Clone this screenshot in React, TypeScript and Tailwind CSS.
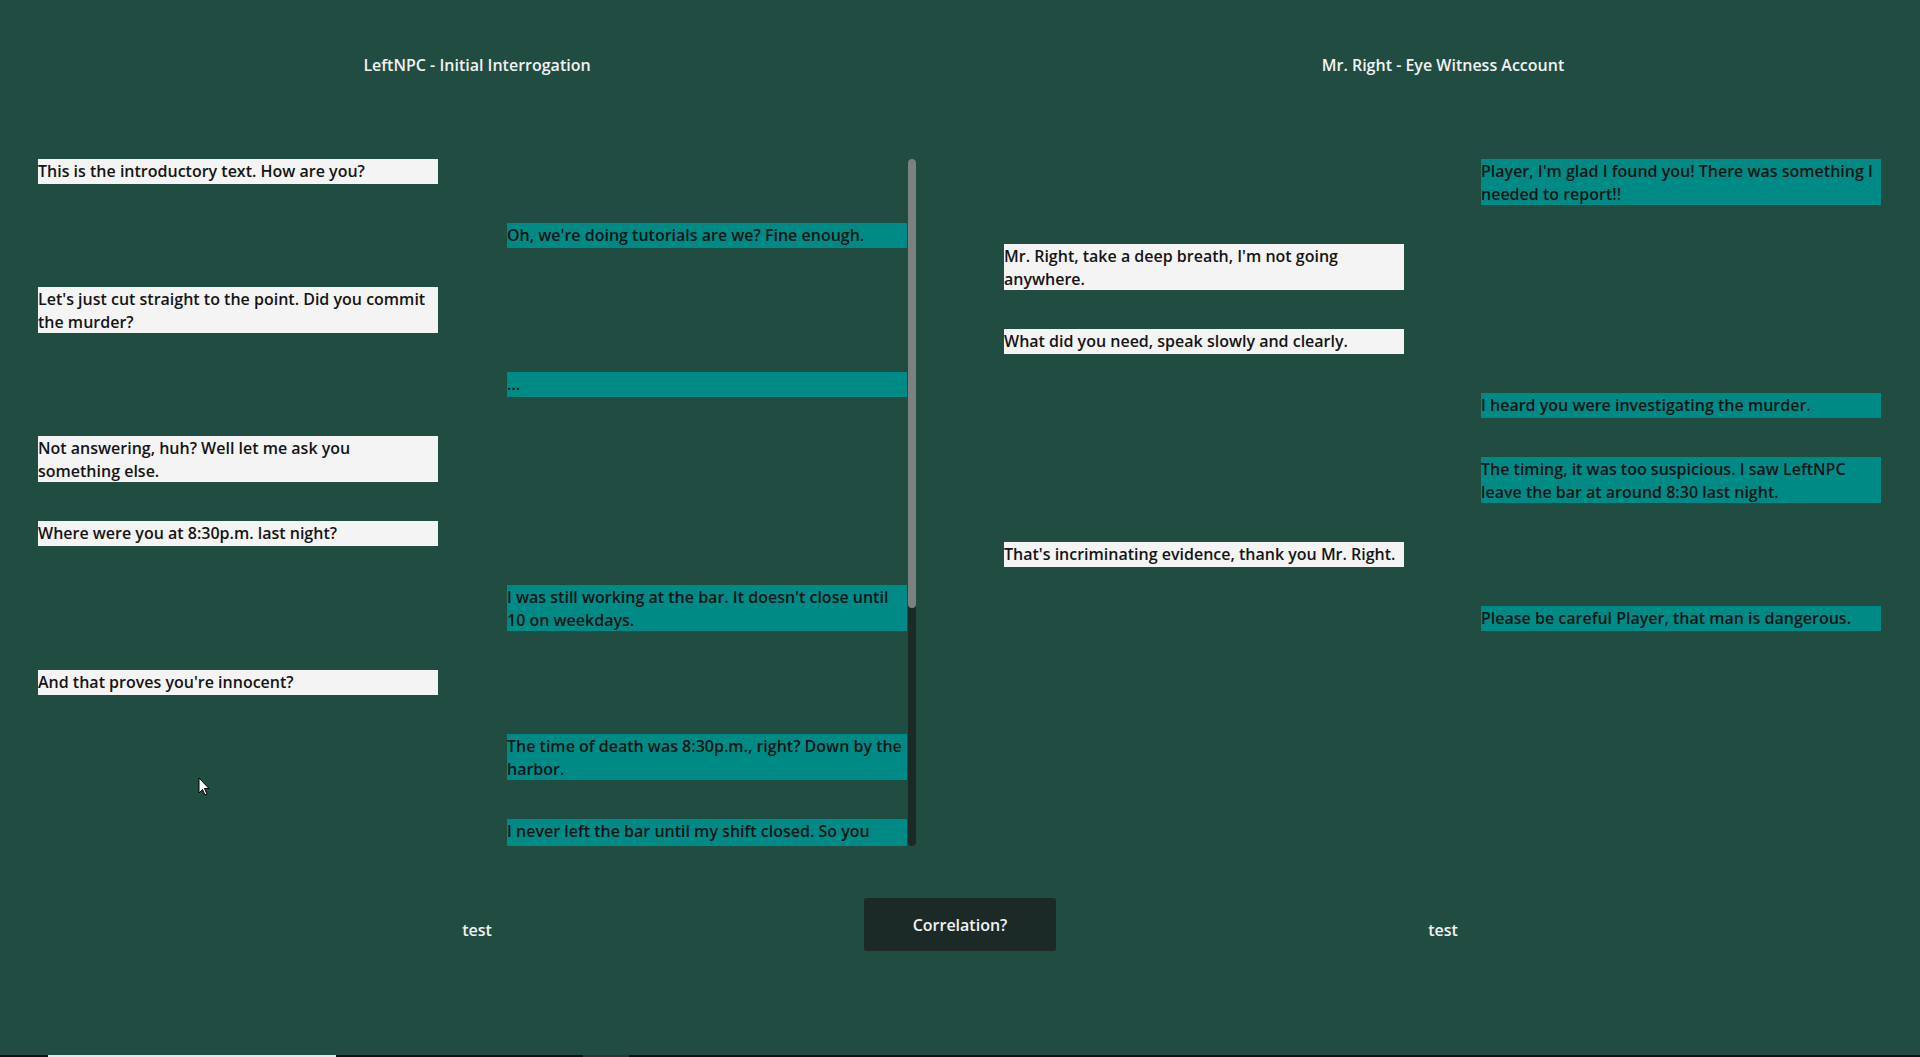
type Line = { side: 'player' | 'npc'; text: string; extra?: string };

const leftLines: Line[] = [
  { side: 'player', text: 'This is the introductory text. How are you?' },
  { side: 'npc', text: "Oh, we're doing tutorials are we? Fine enough." },
  { side: 'player', text: "Let's just cut straight to the point. Did you commit the murder?" },
  { side: 'npc', text: '...' },
  { side: 'player', text: 'Not answering, huh? Well let me ask you something else.' },
  { side: 'player', text: 'Where were you at 8:30p.m. last night?' },
  { side: 'npc', text: "I was still working at the bar. It doesn't close until 10 on weekdays." },
  { side: 'player', text: "And that proves you're innocent?" },
  { side: 'npc', text: 'The time of death was 8:30p.m., right? Down by the harbor.' },
  { side: 'npc', text: 'I never left the bar until my shift closed. So you', extra: 'min-h-[46px]' },
];

const rightLines: Line[] = [
  { side: 'npc', text: "Player, I'm glad I found you! There was something I needed to report!!" },
  { side: 'player', text: "Mr. Right, take a deep breath, I'm not going anywhere." },
  { side: 'player', text: 'What did you need, speak slowly and clearly.' },
  { side: 'npc', text: 'I heard you were investigating the murder.' },
  { side: 'npc', text: 'The timing, it was too suspicious. I saw LeftNPC leave the bar at around 8:30 last night.' },
  { side: 'player', text: "That's incriminating evidence, thank you Mr. Right." },
  { side: 'npc', text: 'Please be careful Player, that man is dangerous.' },
];

function Bubble({ line }: { line: Line }) {
  // 玩家台词靠左白底，NPC 台词靠右青色底
  const color = line.side === 'player' ? 'bg-[#f4f4f4] self-start' : 'bg-[#008a86] self-end';
  return (
    <div className={`w-[400px] min-h-[25px] shrink-0 pr-[4px] text-[16px] leading-[23px] text-[#141414] ${color} ${line.extra ?? ''}`}>
      <span className="relative top-[1px]">{line.text}</span>
    </div>
  );
}

function Panel({ title, lines, scroll }: { title: string; lines: Line[]; scroll?: boolean }) {
  return (
    <div className="flex flex-col w-[878px] shrink-0">
      <div className="pt-[54px] h-[77px] text-center text-[16px] leading-[23px] text-[#f2f2f2]">{title}</div>
      <div className="mt-[82px] h-[687px] flex">
        <div className={`flex flex-col gap-[39px] overflow-hidden ${scroll ? 'w-[869px]' : 'w-[877px]'}`}>
          {lines.map((l, i) => (
            <Bubble key={i} line={l} />
          ))}
        </div>
        {scroll && (
          <div className="ml-[1px] w-[8px] h-full rounded-full bg-[#1c2a26] flex flex-col">
            <div className="h-[449px] rounded-full bg-[#7a817e]" />
          </div>
        )}
      </div>
      <div className="mt-[73px] h-[23px] text-center text-[16px] leading-[23px] text-[#f2f2f2]">test</div>
    </div>
  );
}

export default function App() {
  return (
    <div
      className="relative w-[1920px] h-[1057px] overflow-hidden bg-[#214c41] flex flex-col font-semibold"
      style={{ fontFamily: '"Open Sans", "Noto Sans", sans-serif' }}
    >
      <div className="flex pl-[38px]">
        <Panel title="LeftNPC - Initial Interrogation" lines={leftLines} scroll />
        {/* 中间按钮列 */}
        <div className="w-[88px] shrink-0 flex justify-center">
          <button className="mt-[898px] -mx-[52px] w-[192px] h-[53px] shrink-0 rounded-[3px] bg-[#1b2a26] text-[16px] text-[#f2f2f2] font-semibold">
            Correlation?
          </button>
        </div>
        <Panel title="Mr. Right - Eye Witness Account" lines={rightLines} />
      </div>

      {/* 底部任务栏细线 */}
      <div className="mt-auto h-[2px] bg-[#111] flex">
        <div className="ml-[48px] w-[288px] bg-[#e6e6e6]" />
        <div className="ml-[247px] w-[46px] bg-[#333]" />
      </div>

      {/* 鼠标指针 */}
      <svg className="absolute left-[198px] top-[777px]" width="12" height="19" viewBox="0 0 12 19">
        <path d="M1 1 L1 16 L4.5 12.5 L7 18 L9 17 L6.5 11.5 L11 11.5 Z" fill="#fff" stroke="#000" strokeWidth="1" strokeLinejoin="round" />
      </svg>
    </div>
  );
}
